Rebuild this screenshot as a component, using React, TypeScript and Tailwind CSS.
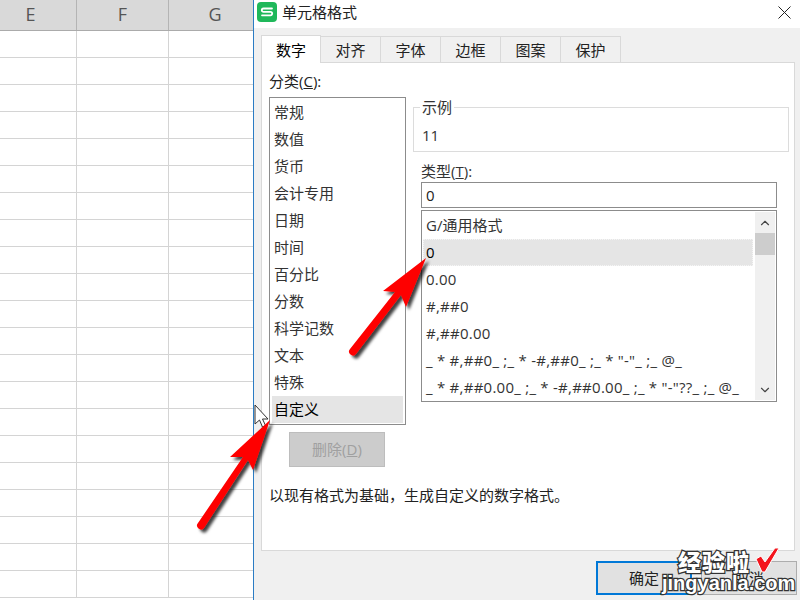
import { ChevronDown, ChevronUp } from "lucide-react";

const TABS = ["数字", "对齐", "字体", "边框", "图案", "保护"];
const CATEGORIES = ["常规", "数值", "货币", "会计专用", "日期", "时间", "百分比", "分数", "科学记数", "文本", "特殊", "自定义"];
const FORMATS = [
  "G/通用格式",
  "0",
  "0.00",
  "#,##0",
  "#,##0.00",
  '_ * #,##0_ ;_ * -#,##0_ ;_ * "-"_ ;_ @_',
  '_ * #,##0.00_ ;_ * -#,##0.00_ ;_ * "-"??_ ;_ @_',
];

function Sheet() {
  return (
    <div className="w-[253px] shrink-0 overflow-hidden bg-white">
      <div className="grid h-[31px] grid-cols-[77px_92px_84px] border-b border-[#ababab] bg-[#d9d9d9] text-[18px] leading-[29px] text-[#555]">
        <div className="border-r border-[#b4b4b4] pr-[15px] text-center">E</div>
        <div className="border-r border-[#b4b4b4] text-center">F</div>
        <div className="pl-[8px] text-center">G</div>
      </div>
      <div className="grid grid-cols-[77px_92px_84px] auto-rows-[27px]">
        {Array.from({ length: 63 }, (_, i) => (
          <div key={i} className={i % 3 === 2 ? "border-b border-[#d4d4d4]" : "border-r border-b border-[#d4d4d4]"} />
        ))}
      </div>
    </div>
  );
}

function TitleBar() {
  return (
    <div className="flex h-[28px] shrink-0 items-center bg-white pl-[3px] pr-[9px]">
      <svg width="20" height="20" viewBox="0 0 20 20" className="mb-[4px]">
        <rect width="20" height="20" rx="4" fill="#1fb85a" />
        <path d="M15 6.500H6.500a1.600 1.600 0 0 0 0 3.400h7a1.600 1.600 0 0 1 0 3.400H5" fill="none" stroke="#fff" strokeWidth="1.800" strokeLinecap="round" />
      </svg>
      <span className="ml-[5px] mb-[4px] text-[15px] leading-[20px] text-[#222]">单元格格式</span>
      <svg width="13" height="13" viewBox="0 0 13 13" className="ml-auto mb-[4px]">
        <path d="M0.500 0.500L12.500 12.500M12.500 0.500L0.500 12.500" stroke="#222" strokeWidth="1" />
      </svg>
    </div>
  );
}

function Tabs() {
  return (
    <div className="relative z-10 flex h-[27px]">
      {TABS.map((tab, i) => (
        <div
          key={tab}
          className={
            i === 0
              ? "h-[28px] w-[60px] border-x border-t border-[#d9d9d9] bg-white text-center text-[15px] leading-[28px] text-black"
              : "mt-px h-[26px] w-[60px] border-t border-r border-[#d9d9d9] bg-[#f0f0f0] text-center text-[15px] leading-[26px] text-[#222]"
          }
        >
          {tab}
        </div>
      ))}
    </div>
  );
}

function CategoryColumn() {
  return (
    <div className="w-[137px] shrink-0">
      <div className="h-[18px] text-[15px] leading-[18px] text-[#222]">
        分类(<span className="underline">C</span>):
      </div>
      <div className="mt-[7px] h-[328px] border border-[#8c8c8c] px-[2px] pt-px">
        {CATEGORIES.map((item, i) => (
          <div
            key={item}
            className={
              i === 11
                ? "h-[27px] bg-[#e5e5e5] pl-[2px] text-[15px] leading-[26px] text-black"
                : "h-[27px] pl-[2px] text-[15px] leading-[26px] text-[#333]"
            }
          >
            {item}
          </div>
        ))}
      </div>
      <div className="mt-[7px] ml-[20px] flex h-[35px] w-[96px] items-center justify-center border border-[#bdbdbd] bg-[#cccccc] text-[15px] text-[#a0a0a0]">
        删除(<span className="underline">D</span>)
      </div>
    </div>
  );
}

function FormatList() {
  return (
    <div className="mt-[2px] flex h-[192px] border border-[#8c8c8c]">
      <div className="w-[331px] shrink-0 overflow-hidden pl-px pt-[1px]">
        {FORMATS.map((item, i) => (
          <div
            key={item}
            className={
              i === 1
                ? "h-[27px] whitespace-nowrap border border-dotted border-[#f5f5f5] bg-[#e5e5e5] pl-[2px] text-[15px] leading-[24px] text-black"
                : i === 0
                  ? "h-[27px] whitespace-nowrap pl-[3px] text-[15px] leading-[26px] text-[#333]"
                  : "h-[27px] whitespace-nowrap pl-[3px] text-[15px] leading-[26px] tracking-[0.25px] text-[#333]"
            }
          >
            {item}
          </div>
        ))}
      </div>
      <div className="mt-px mb-px ml-[2px] flex w-[20px] shrink-0 flex-col bg-[#f0f0f0]">
        <div className="flex h-[21px] items-center justify-center">
          <ChevronUp size={14} strokeWidth={2} color="#444" />
        </div>
        <div className="h-[22px] bg-[#cdcdcd]" />
        <div className="mt-auto flex h-[21px] items-center justify-center">
          <ChevronDown size={14} strokeWidth={2} color="#444" />
        </div>
      </div>
    </div>
  );
}

function TypeColumn() {
  return (
    <div className="ml-[7px] w-[376px] shrink-0 pt-[25px]">
      <fieldset className="h-[55px] border border-[#dcdcdc]">
        <legend className="ml-[6px] px-[2px] text-[15px] leading-[20px] text-[#333]">示例</legend>
        <div className="pt-[8px] pl-[8px] text-[15px] leading-[20px] text-[#333]">11</div>
      </fieldset>
      <div className="ml-[8px] w-[356px]">
        <div className="mt-[9px] h-[20px] text-[15px] leading-[20px] text-[#333]">
          类型(<span className="underline">T</span>):
        </div>
        <div className="mt-px h-[26px] border border-[#8c8c8c] pl-[4px] text-[15px] leading-[24px] text-[#222]">0</div>
        <FormatList />
      </div>
    </div>
  );
}

function Overlay() {
  return (
    <svg width="800" height="600" viewBox="0 0 800 600" className="pointer-events-none absolute top-0 left-0">
      <defs>
        <filter id="arrowShadow" x="-30%" y="-30%" width="160%" height="160%">
          <feDropShadow dx="3" dy="3" stdDeviation="1.800" floodColor="#000" floodOpacity="0.75" />
        </filter>
      </defs>
      <path d="M255 405V424L259.500 420L262.500 427L265.500 425.500L262.500 419H268Z" fill="#fff" stroke="#333" strokeWidth="1" />
      <g filter="url(#arrowShadow)" fill="#fe0000">
        <path d="M270 420L230 457L243 457L198 523A3.500 3.500 0 0 0 204 528L248 460L253 470Z" />
        <path d="M426 258L383 291L395 292L350 349A3.500 3.500 0 0 0 356 354L401 295L406 307Z" />
      </g>
      <path d="M756 559L761 556L765 562L775 548H779L765 572H762Z" fill="#f4141c" stroke="#fff" strokeWidth="1" />
    </svg>
  );
}

function Watermark() {
  return (
    <div className="pointer-events-none absolute top-[551px] left-[662px] w-[125px] font-black text-white [-webkit-text-stroke:2.500px_#333] [paint-order:stroke_fill]">
      <div className="ml-[16px] h-[22px] text-[23px] leading-[22px] tracking-[1px]">经验啦</div>
      <div className="h-[22px] text-[20px] leading-[20px] font-['Liberation_Sans',sans-serif]">jingyanla.com</div>
    </div>
  );
}

export default function App() {
  return (
    <div className="relative flex h-[600px] w-[800px] overflow-hidden font-['Open_Sans','Noto_Sans_CJK_SC',sans-serif]">
      <Sheet />
      <div className="flex w-[547px] flex-col border-l border-[#2b7cc4] bg-[#f0f0f0]">
        <TitleBar />
        <div className="pt-[7px] pr-[5px] pl-[7px]">
          <Tabs />
          <div className="h-[489px] border border-[#d9d9d9] bg-white pt-[9px] pl-[7px]">
            <div className="flex">
              <CategoryColumn />
              <TypeColumn />
            </div>
            <div className="mt-[18px] text-[15px] leading-[20px] text-[#222]">以现有格式为基础，生成自定义的数字格式。</div>
          </div>
        </div>
        <div className="mt-[10px] flex justify-end gap-[9px] pr-[3px]">
          <div className="flex h-[34px] w-[96px] items-center justify-center border-2 border-[#0078d7] bg-[#e1e1e1] text-[15px] text-[#222]">确定</div>
          <div className="flex h-[34px] w-[96px] items-center justify-center border border-[#adadad] bg-[#e1e1e1] text-[15px] text-[#222]">取消</div>
        </div>
      </div>
      <Overlay />
      <Watermark />
    </div>
  );
}
